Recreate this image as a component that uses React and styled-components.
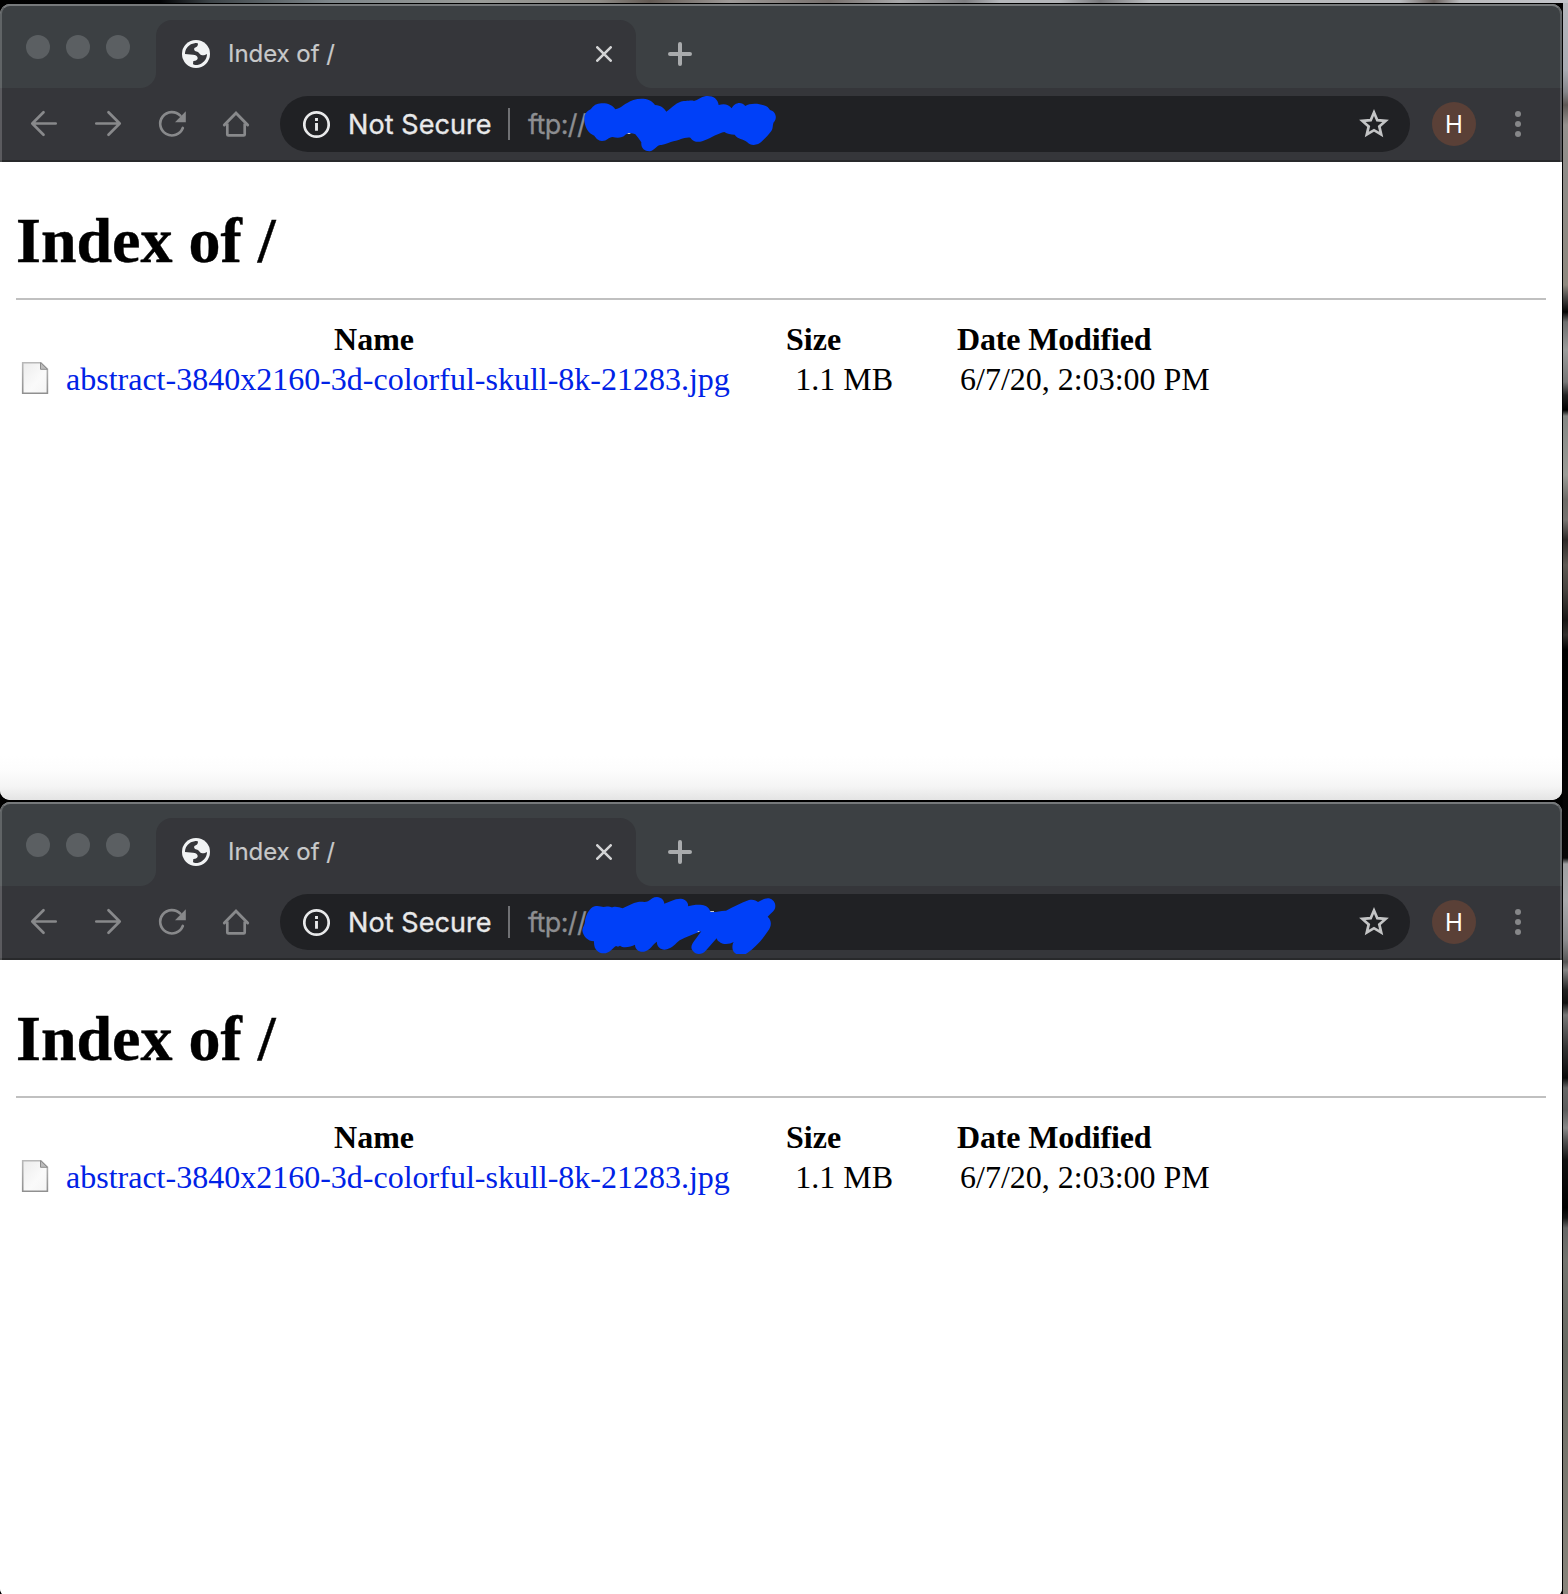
import React from "react";
import styled, { createGlobalStyle } from "styled-components";

const Global = createGlobalStyle`
  * { box-sizing: border-box; }
  html, body { margin: 0; padding: 0; background: #000; }
  body { overflow: hidden; }
`;

const ui = `Inter, Roboto, sans-serif`;

const Desktop = styled.main`
  width: 1568px;
  height: 1594px;
  overflow: hidden;
  display: flex;
  flex-direction: column;
  gap: 2px;
  padding-top: 4px;
  background:
    linear-gradient(90deg, #000 0, #020305 160px, #3c4347 210px, #7d8589 330px, #999b98 480px, #8d8a85 600px, #625953 650px, #9d9997 730px, #77706d 830px, #a7a7a9 900px, #7d7d80 965px, #b4b6ba 1000px, #b4b6ba 1060px, #77777a 1100px, #b9bbbe 1150px, #b9babd 1400px, #6a625f 1434px, #b9b9bb 1460px, #c3c5cb 1568px) 0 0 / 100% 3px no-repeat,
    linear-gradient(180deg, #b5b7bd 0, #a9abb2 70px, #85868a 92px, #5d5855 105px, #95918e 125px, #8e8b87 180px, #8f897f 285px, #4d4b49 297px, #050505 312px, #6e6e6e 322px, #9b9c9b 350px, #777 382px, #232323 395px, #000 410px, #858784 416px, #9b9c97 475px, #6d6b67 500px, #767370 520px, #2e2a28 540px, #5e5954 565px, #47433f 590px, #181615 620px, #322f2d 635px, #000 650px, #060606 858px, #9fa0a2 864px, #a9a9ac 900px, #8b8b8e 940px, #555 962px, #858585 970px, #222 990px, #111 1003px, #777 1015px, #333 1048px, #0a0a0a 1078px, #666 1088px, #5c5c5c 1110px, #888 1128px, #555 1140px, #111 1160px, #000 1208px, #161616 1218px, #666 1228px, #73746f 1260px, #686962 1350px, #77756d 1450px, #89857c 1594px) 1563px 0 / 5px 100% no-repeat,
    #000;
`;

const Frame = styled.section`
  flex: none;
  position: relative;
  width: 1562px;
  height: 796px;
  border-radius: 10px;
  overflow: hidden;
  background: #fff;
  display: flex;
  flex-direction: column;
`;

/* light bevel along the chrome's top and sides */
const Bevel = styled.div`
  position: absolute;
  inset: 0 0 auto 0;
  height: 158px;
  pointer-events: none;
  border: 2px solid rgba(255, 255, 255, 0.19);
  border-top-color: rgba(255, 255, 255, 0.3);
  border-bottom: 0;
  border-radius: 10px 10px 0 0;
`;

const TabStrip = styled.header`
  flex: none;
  height: 84px;
  background: #3c4043;
  display: flex;
  align-items: flex-end;
`;

const Lights = styled.div`
  width: 156px;
  height: 84px;
  padding: 31px 0 0 26px;
  display: flex;
  gap: 16px;
`;

const Light = styled.span`
  width: 24px;
  height: 24px;
  border-radius: 50%;
  background: #5b5f62;
`;

const Tab = styled.div`
  position: relative;
  width: 480px;
  height: 68px;
  border-radius: 16px 16px 0 0;
  background: #35363a;
  display: flex;
  align-items: center;
  padding: 0 24px 0 26px;
  &::before, &::after {
    content: "";
    position: absolute;
    bottom: 0;
    width: 16px;
    height: 16px;
  }
  &::before {
    left: -16px;
    background: radial-gradient(circle at 0 0, transparent 15.5px, #35363a 16.5px);
  }
  &::after {
    right: -16px;
    background: radial-gradient(circle at 100% 0, transparent 15.5px, #35363a 16.5px);
  }
`;

const TabTitle = styled.span`
  flex: 1;
  padding-left: 18px;
  font: 400 24px/30px ${ui};
  letter-spacing: -0.05px;
  -webkit-text-stroke: 0.2px currentColor;
  color: #c8c9ca;
`;

const Icon = styled.svg`
  display: block;
  flex: none;
  width: ${(p) => p.$w}px;
  height: ${(p) => p.$h || p.$w}px;
  fill: none;
  color: ${(p) => p.$c};
`;

const NewTab = styled.div`
  height: 68px;
  display: flex;
  align-items: center;
  padding-left: 30px;
`;

const Toolbar = styled.nav`
  flex: none;
  height: 74px;
  background: #35363a;
  border-bottom: 2px solid #28292b;
  display: flex;
  align-items: center;
  padding-left: 28px;
`;

const NavButtons = styled.div`
  width: 252px;
  display: flex;
  gap: 32px;
`;

const Omnibox = styled.div`
  position: relative;
  width: 1130px;
  height: 56px;
  border-radius: 28px;
  background: #202124;
  display: flex;
  align-items: center;
  padding: 0 20px 0 21px;
`;

const Security = styled.span`
  width: 160px;
  margin-left: 17px;
  padding-top: 2px;
  font: 400 27px/36px ${ui};
  letter-spacing: 0.08px;
  -webkit-text-stroke: 0.35px currentColor;
  white-space: nowrap;
  color: #e8e9ea;
`;

const Divider = styled.i`
  width: 2px;
  height: 32px;
  background: #707174;
`;

const Url = styled.span`
  flex: 1;
  padding: 2px 0 0 18px;
  font: 400 27px/36px ${ui};
  letter-spacing: -0.6px;
  -webkit-text-stroke: 0.3px currentColor;
  color: #8d8e91;
`;

const Scribble = styled.svg`
  position: absolute;
  left: 300px;
  top: -6px;
  width: 200px;
  height: 66px;
`;

const Avatar = styled.span`
  width: 44px;
  height: 44px;
  margin-left: 22px;
  border-radius: 50%;
  background: #5a4037;
  color: #fff;
  font: 400 24px/46px ${ui};
  text-align: center;
`;

const Menu = styled.span`
  width: 6px;
  margin-left: 39px;
  display: flex;
  flex-direction: column;
  gap: 4px;
`;

const Dot = styled.i`
  width: 6px;
  height: 6px;
  border-radius: 50%;
  background: #868789;
`;

const Page = styled.article`
  flex: 1;
  padding: 42px 16px 0;
  font-family: "Liberation Serif", serif;
  font-size: 32px;
  color: #000;
  background: ${(p) => p.$shaded
    ? "linear-gradient(180deg, #fff 0, #fff 594px, #fcfcfc 610px, #f4f4f4 625px, #e4e4e4 638px)"
    : "#fff"};
`;

const Title = styled.h1`
  margin: 0;
  height: 94px;
  font-size: 64px;
  line-height: 74px;
  font-weight: 700;
  -webkit-text-stroke: 0.4px currentColor;
`;

const Rule = styled.hr`
  margin: 0 0 19px;
  border: 0;
  height: 2px;
  background: #c0c0c0;
`;

const Listing = styled.div`
  display: grid;
  grid-template-columns: 716px 161px 1fr;
  grid-auto-rows: 40px;
  line-height: 40px;
  white-space: nowrap;
`;

const Head = styled.b`
  text-align: ${(p) => p.$align || "left"};
  padding-left: ${(p) => p.$left || 0}px;
  letter-spacing: ${(p) => p.$track || 0}px;
`;

const Cell = styled.span`
  text-align: ${(p) => p.$align || "left"};
  padding-left: ${(p) => p.$left || 0}px;
`;

const FileCell = styled.span`
  display: flex;
  align-items: center;
  padding-left: 4px;
  gap: 16px;
`;

const FileGlyph = styled.span`
  height: 36px;
`;

const Link = styled.a`
  color: #0022e6;
`;

const grey = "#88898b";

const Arrow = ({ flip }) => (
  <Icon $w={32} $c={grey} viewBox="0 0 32 32">
    <path
      transform={flip ? "translate(32 0) scale(-1 1)" : undefined}
      d="M27.700 15.500H4.500M15.500 4.300 4.300 15.500 15.500 26.700"
      stroke="currentColor" strokeWidth="2.700" strokeLinecap="round" strokeLinejoin="round"
    />
  </Icon>
);

const Reload = () => (
  <Icon $w={32} $c={grey} viewBox="0 0 32 32">
    <path d="M26.800 20A11.700 11.700 0 1 1 24.3 7.6" stroke="currentColor" strokeWidth="2.700" strokeLinecap="round" />
    <path d="M29.800 3.200V14.300H19Z" fill="currentColor" />
  </Icon>
);

const Home = () => (
  <Icon $w={32} $c={grey} viewBox="0 0 32 32">
    <path d="M4.3 17 16 5 27.7 17" stroke="currentColor" strokeWidth="2.9" strokeLinecap="round" />
    <path d="M7.3 15.5V26.4Q7.3 27.4 8.3 27.4H23.7Q24.7 27.4 24.7 26.4V15.5" stroke="currentColor" strokeWidth="2.7" />
  </Icon>
);

const Globe = () => (
  <Icon $w={28} $c="#f1f3f4" viewBox="0 0 84 84">
    <circle cx="42" cy="42" r="42" fill="currentColor" />
    <path
      d="M9 42C9 25 22 11 38 9.500C43 9 47 10 48 11C48 18 44 21 37 24C35 31 38 34 46 35C52 37 53 43 58 45C64 47 69 45 75 42C75 59 62 72 46 75C40 76 35 74 33 72L34 63C43 62 48 59 47 53C46 47 40 44 33 44Z"
      fill="#35363a"
    />
  </Icon>
);

const FileIcon = () => (
  <Icon $w={30} $h={34} viewBox="0 0 30 34">
    <defs>
      <linearGradient id="sheet" x1="0" y1="0" x2="1" y2="1">
        <stop offset="0" stopColor="#ececec" />
        <stop offset="0.6" stopColor="#fafafa" />
        <stop offset="1" stopColor="#f4f4f4" />
      </linearGradient>
      <linearGradient id="sheetEdge" x1="0" y1="0" x2="0" y2="1">
        <stop offset="0" stopColor="#b8b8b8" />
        <stop offset="1" stopColor="#909090" />
      </linearGradient>
    </defs>
    <path d="M2.700 1.700H21L27.400 8V32.300H2.700Z" fill="url(#sheet)" stroke="url(#sheetEdge)" strokeWidth="1.6" />
    <path d="M20.500 1.700V8.300H27.400Z" fill="#bdbdbd" stroke="#8c8c8c" strokeWidth="1" />
  </Icon>
);

const marks = [
  {
    box: "540 270 600 198",
    d: "M553 358C552 342 560 334 572 328C580 316 590 310 604 310C622 309 636 314 646 328C662 326 674 309 700 300C724 293 752 295 765 315C783 316 791 324 799 335C818 321 830 306 851 303C866 304 872 300 882 303C894 300 902 291 918 288C938 286 954 296 956 315C972 310 985 312 995 325C1002 309 1024 302 1036 318C1048 309 1075 309 1091 316C1101 318 1106 324 1110 330C1126 333 1132 352 1124 364C1116 370 1121 384 1114 393C1107 403 1096 414 1086 424C1074 437 1052 439 1041 426C1030 416 1013 418 1004 404C992 404 982 402 973 396C956 399 932 414 918 419C902 427 883 430 871 413C850 411 838 422 823 423C808 426 797 434 784 435C771 433 766 450 750 454C734 455 722 445 724 427C718 418 712 410 706 403C694 398 686 400 676 404C667 415 650 414 638 411C625 411 622 423 606 423C594 422 588 414 583 407C564 400 554 382 553 358Z",
    peek: "M683 399H691V402H683Z",
  },
  {
    box: "60 24 600 198",
    d: "M67 150C68 140 76 133 75 122C79 104 88 84 104 79C114 76 124 80 130 81C142 77 150 81 158 82C168 78 178 83 188 85C203 78 218 69 234 66C246 64 254 68 264 64C274 57 280 51 291 51C304 52 312 60 313 71C329 66 344 55 363 56C377 58 386 67 384 79C397 75 421 72 435 77C446 80 448 90 454 96C468 98 482 91 498 92C520 80 544 69 567 60C579 57 589 61 594 66C604 61 615 53 627 55C642 59 650 73 644 88C638 97 629 104 623 110C636 121 635 139 624 153C608 178 584 204 562 219C548 229 530 227 521 215C515 205 517 193 521 186C508 194 486 194 478 185C472 183 472 179 470 175L437 212C426 225 407 225 399 213C389 203 397 191 402 184L424 154C402 162 379 171 359 181C347 191 337 204 321 208C304 213 289 200 291 185C279 191 270 212 252 215C236 217 225 207 225 194C212 200 192 206 180 197L174 200L168 198C156 206 148 220 132 220C114 220 101 208 102 184C84 184 68 168 67 150Z",
    peek: "M451 93H462V96H451ZM413 153H418V156H413Z",
  },
];

function BrowserWindow({ mark, shaded }) {
  return (
    <Frame>
      <TabStrip>
        <Lights><Light /><Light /><Light /></Lights>
        <Tab>
          <Globe />
          <TabTitle>Index of /</TabTitle>
          <Icon $w={16} $c="#d2d3d4" viewBox="0 0 16 16">
            <path d="M1.300 1.300 14.700 14.700M14.700 1.300 1.300 14.700" stroke="currentColor" strokeWidth="2.600" strokeLinecap="round" />
          </Icon>
        </Tab>
        <NewTab>
          <Icon $w={28} $c="#a9abad" viewBox="0 0 28 28">
            <path d="M14 4V24M4 14H24" stroke="currentColor" strokeWidth="4" strokeLinecap="round" />
          </Icon>
        </NewTab>
      </TabStrip>
      <Toolbar>
        <NavButtons><Arrow /><Arrow flip /><Reload /><Home /></NavButtons>
        <Omnibox>
          <Icon $w={30} $c="#e8e9ea" viewBox="0 0 30 30">
            <circle cx="15.500" cy="15.500" r="12.200" stroke="currentColor" strokeWidth="2.700" />
            <path d="M15.500 14V21.700M15.500 9V12" stroke="currentColor" strokeWidth="2.900" />
          </Icon>
          <Security>Not Secure</Security>
          <Divider />
          <Url>ftp://</Url>
          <Icon $w={32} $c="#c3c4c5" viewBox="0 0 32 32">
            <path d="M16 4.500 19.300 12.200 27.600 12.900 21.300 18.400 23.200 26.500 16 22.200 8.800 26.500 10.700 18.400 4.400 12.900 12.700 12.200Z" stroke="currentColor" strokeWidth="2.700" />
          </Icon>
          <Scribble viewBox={mark.box}>
            <path d={mark.d} fill="#0040f8" />
            <path d={mark.peek} fill="#c8cacc" />
          </Scribble>
        </Omnibox>
        <Avatar>H</Avatar>
        <Menu><Dot /><Dot /><Dot /></Menu>
      </Toolbar>
      <Page $shaded={shaded}>
        <Title>Index of /</Title>
        <Rule />
        <Listing>
          <Head $align="center">Name</Head>
          <Head $left={54}>Size</Head>
          <Head $left={64} $track={-0.15}>Date Modified</Head>
          <FileCell>
            <FileGlyph><FileIcon /></FileGlyph>
            <Link>abstract-3840x2160-3d-colorful-skull-8k-21283.jpg</Link>
          </FileCell>
          <Cell $align="right">1.1 MB</Cell>
          <Cell $left={67}>6/7/20, 2:03:00 PM</Cell>
        </Listing>
      </Page>
      <Bevel />
    </Frame>
  );
}

export default function App() {
  return (
    <>
      <Global />
      <Desktop>
        <BrowserWindow mark={marks[0]} shaded />
        <BrowserWindow mark={marks[1]} />
      </Desktop>
    </>
  );
}
